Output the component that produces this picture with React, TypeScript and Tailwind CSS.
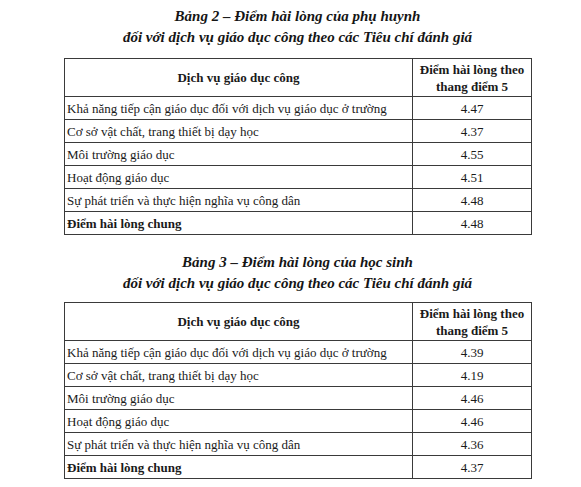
type Row = { label: string; score: string; bold?: boolean };

type Table = {
  title: string;
  rows: Row[];
};

const subtitle = "đối với dịch vụ giáo dục công theo các Tiêu chí đánh giá";

const tables: Table[] = [
  {
    title: "Bảng 2 – Điểm hài lòng của phụ huynh",
    rows: [
      { label: "Khả năng tiếp cận giáo dục đối với dịch vụ giáo dục ở trường", score: "4.47" },
      { label: "Cơ sở vật chất, trang thiết bị dạy học", score: "4.37" },
      { label: "Môi trường giáo dục", score: "4.55" },
      { label: "Hoạt động giáo dục", score: "4.51" },
      { label: "Sự phát triển và thực hiện nghĩa vụ công dân", score: "4.48" },
      { label: "Điểm hài lòng chung", score: "4.48", bold: true },
    ],
  },
  {
    title: "Bảng 3 – Điểm hài lòng của học sinh",
    rows: [
      { label: "Khả năng tiếp cận giáo dục đối với dịch vụ giáo dục ở trường", score: "4.39" },
      { label: "Cơ sở vật chất, trang thiết bị dạy học", score: "4.19" },
      { label: "Môi trường giáo dục", score: "4.46" },
      { label: "Hoạt động giáo dục", score: "4.46" },
      { label: "Sự phát triển và thực hiện nghĩa vụ công dân", score: "4.36" },
      { label: "Điểm hài lòng chung", score: "4.37", bold: true },
    ],
  },
];

const cell = "border border-[#3a3a3a]";

const ScoreTable = ({ table, first }: { table: Table; first: boolean }) => (
  <section className={first ? "pt-[6px]" : "mt-[17px]"}>
    <div className="ml-[64px] w-[467px] text-center text-[15px] leading-[21px] font-bold italic text-[#151515]">
      <div>{table.title}</div>
      <div>{subtitle}</div>
    </div>
    <table
      className={`ml-[64px] w-[467px] table-fixed border-collapse text-[13px] text-[#1a1a1a] ${
        first ? "mt-[10px]" : "mt-[8px]"
      }`}
    >
      <colgroup>
        <col className="w-[348px]" />
        <col className="w-[119px]" />
      </colgroup>
      <thead>
        <tr className="h-[38px]">
          <th className={`${cell} font-bold leading-[17px]`}>Dịch vụ giáo dục công</th>
          <th className={`${cell} font-bold leading-[17px]`}>
            Điểm hài lòng theo
            <br />
            thang điểm 5
          </th>
        </tr>
      </thead>
      <tbody>
        {table.rows.map((r) => (
          <tr key={r.label} className="h-[23px]">
            <td className={`${cell} pl-[2px] pt-[2px] leading-[16px] ${r.bold ? "font-bold" : ""}`}>
              {r.label}
            </td>
            <td className={`${cell} pt-[2px] text-center leading-[16px]`}>{r.score}</td>
          </tr>
        ))}
      </tbody>
    </table>
  </section>
);

export default function App() {
  return (
    <div className="h-[487px] w-[581px] overflow-hidden bg-white font-[family-name:Liberation_Serif,Times_New_Roman,serif]">
      {tables.map((t, i) => (
        <ScoreTable key={t.title} table={t} first={i === 0} />
      ))}
    </div>
  );
}
